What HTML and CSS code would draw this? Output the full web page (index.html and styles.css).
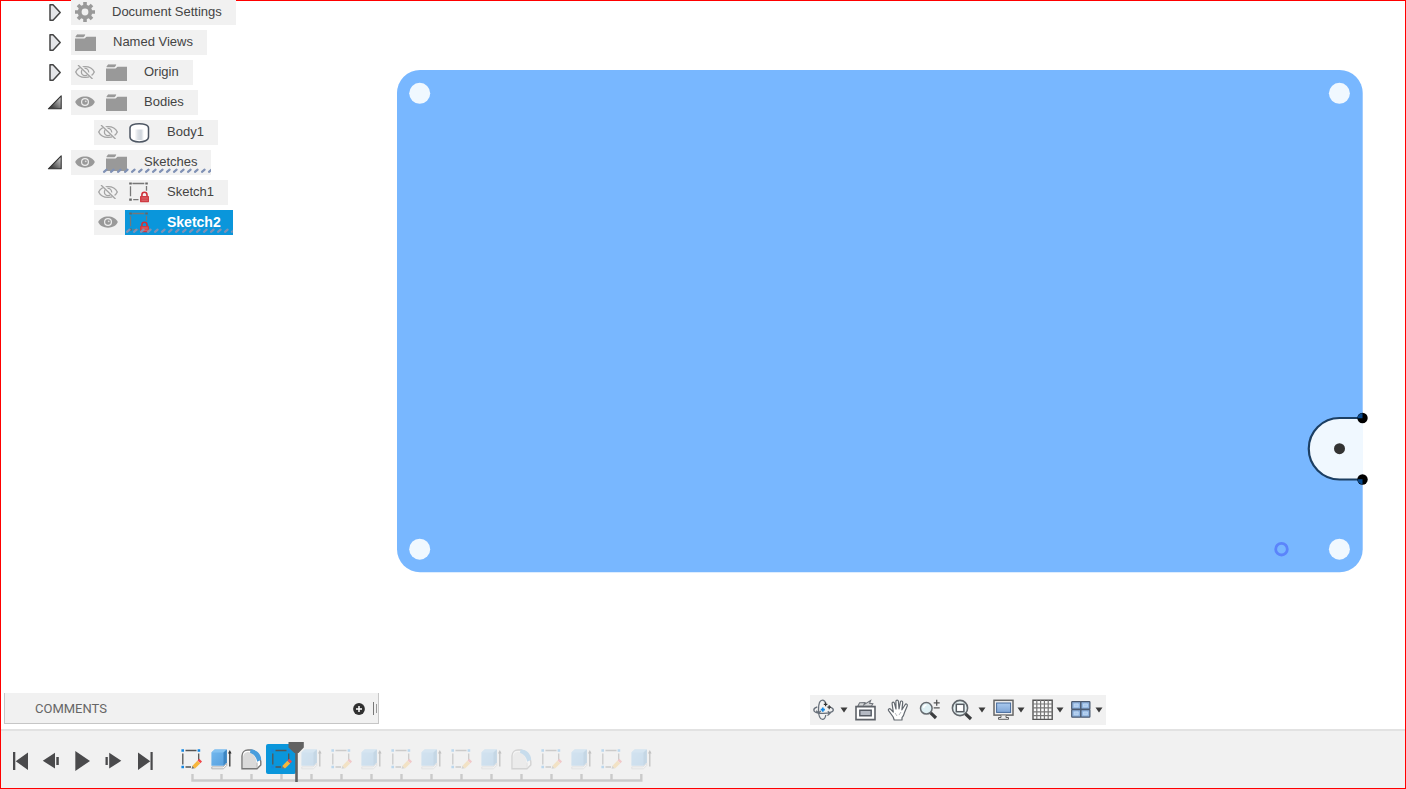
FILE: index.html
```html
<!DOCTYPE html>
<html lang="en">
<head>
<meta charset="utf-8">
<meta name="viewport" content="width=device-width, initial-scale=1">
<title>Sketch editor</title>
<link rel="stylesheet" href="styles.css">
</head>
<body>
<svg class="defs" aria-hidden="true">
  <defs>
    <linearGradient id="g-open" x1="0" y1="1" x2="1" y2="0"><stop offset="0.2" stop-color="#444"/><stop offset="1" stop-color="#ddd"/></linearGradient>
    <linearGradient id="g-body" x1="0" y1="0" x2="1" y2="0"><stop offset="0" stop-color="#fff"/><stop offset="0.35" stop-color="#dde1e6"/><stop offset="0.7" stop-color="#cfd5dc"/><stop offset="1" stop-color="#fff"/></linearGradient>
    <linearGradient id="g-cube" x1="0" y1="0" x2="1" y2="1"><stop offset="0" stop-color="#74b9ee"/><stop offset="1" stop-color="#559fdf"/></linearGradient>
    <linearGradient id="g-screen" x1="0" y1="0" x2="0" y2="1"><stop offset="0" stop-color="#a9c9ee"/><stop offset="1" stop-color="#7fa5d6"/></linearGradient>
    <pattern id="hatch" width="7" height="9" patternUnits="userSpaceOnUse"><path d="M2 5.8 4.6 3.6" stroke="#8091b5" stroke-width="2.2" stroke-linecap="round"/></pattern>
  </defs>
  <symbol id="closed" viewBox="0 0 18 25"><path d="M4 4.8H7L14.2 12.5 7 20.2H4Z" fill="#e4e5e8" stroke="#444" stroke-width="1.5" stroke-linejoin="round"/></symbol>
  <symbol id="open" viewBox="0 0 18 25"><path d="M2.4 18.8H15.2V5.8Z" fill="url(#g-open)" stroke="#333" stroke-width="1.1" stroke-linejoin="round"/></symbol>
  <symbol id="gear" viewBox="0 0 20 20"><g stroke="#999" stroke-width="3.6"><path d="M10 0V20M0 10H20M3 3 17 17M17 3 3 17"/></g><circle cx="10" cy="10" r="7.3" fill="#999"/><circle cx="10" cy="10" r="3.4" fill="#f1f1f1"/></symbol>
  <symbol id="folder" viewBox="0 0 21 17"><path d="M0 4V17H21V2.7H11.5L9.5 4.5H0Z" fill="#999"/><path d="M.8 2.9 2 .8H10L8.6 2.9Z" fill="#999" stroke="#999" stroke-width=".6"/></symbol>
  <symbol id="eye" viewBox="0 0 20 14"><path d="M.2 7C3-.5 17-.5 19.8 7 17 14.5 3 14.5.2 7Z" fill="#999"/><circle cx="10" cy="7" r="4" fill="#eee"/><circle cx="10" cy="7" r="2.8" fill="#999"/><circle cx="10.7" cy="6.3" r=".9" fill="#ddd"/></symbol>
  <symbol id="eye-off" viewBox="0 0 20 14"><g fill="none" stroke="#a3a3a3" stroke-width="1.3"><path d="M.7 7C4-.2 16-.2 19.3 7 16 14.2 4 14.2.7 7Z"/><circle cx="10" cy="7" r="3.6"/><path d="M4.2 0 18 13.6" stroke="#f1f1f1" stroke-width="2.6"/><path d="M3 0 17.5 14"/></g></symbol>
  <symbol id="body" viewBox="0 0 21 21"><path d="M1 6C1 .2 19.5 .2 19.5 6V15C19.5 21.6 1 21.6 1 15Z" fill="#fff" stroke="#4d5663" stroke-width="1.5"/><path d="M5.5 7.5H15V18H5.5Z" fill="url(#g-body)"/></symbol>
  <symbol id="sketch-lock" viewBox="0 0 21 21"><path d="M3.4 1.5H15.3M1.5 4.3V14.3M17.5 4V8.8M4.2 17.7H9.5" stroke="#777" stroke-width="1.3"/><path d="M.2.5H2.8V2.6H.2ZM16.3.5H18.8V2.6H16.3ZM.2 16.6H2.8V18.8H.2Z" fill="#666"/><path d="M12.9 14.5V12.8C12.9 9.4 18 9.4 18 12.8V14.5" fill="none" stroke="#cf3038" stroke-width="1.6"/><rect x="11" y="14" width="9" height="6.2" rx=".6" fill="#cf3b42"/><path d="M12.5 16H18.8M12.5 18.2H18.8" stroke="#e58286" stroke-width=".7"/></symbol>
  <symbol id="plus" viewBox="0 0 12 12"><circle cx="6" cy="6" r="5.9" fill="#303030"/><path d="M6 3V9M3 6H9" stroke="#fff" stroke-width="1.5"/></symbol>
  <symbol id="caret" viewBox="0 0 8 6"><path d="M.5.5H7.5L4 5.5Z" fill="#3c3c3c"/></symbol>

  <symbol id="orbit" viewBox="0 0 22 22"><g fill="none" stroke="#68707a" stroke-width="1.3"><path d="M12.8 16C12.3 19 11 20.4 9.5 20.4 7 20.4 5.5 16.5 5.5 10.8S7 1.2 9.5 1.2C11 1.2 12.1 2.4 12.7 4.5"/><path d="M4.3 7.8C2 8.6.8 9.6.8 10.9.8 13 5 14.4 10.3 14.4S20.3 13 20.3 10.9C20.3 9.7 19 8.7 17.2 8.1M14.5 16.6 17 14.2 14.8 12.2M3.2 11.7 5.5 14 7.8 11.9"/><path d="M10.8 5.4H14.4M12.6 3.6V7.3M14.4 8.2H18M16.2 6.2V10.2" stroke="#333" stroke-width="1.2"/></g><path d="M9.8 8.6V12.8M7.7 10.7H11.9" stroke="#1687e0" stroke-width="1.7"/></symbol>
  <symbol id="look" viewBox="0 0 22 22"><path d="M2.8 7.2 4.6 3.8 10 3.6 9 5.6 15.6 1.6 14.6 4.4 17.8 4.8 16.5 7.2Z" fill="#d6d8da" stroke="#70747a" stroke-width="1.1"/><path d="M1 7.6H20V20.6H1Z" fill="#fff" stroke="#5e6268" stroke-width="1.6"/><path d="M4.8 11.2H16.2V16.8H4.8Z" fill="#b4b9c3" stroke="#555b64" stroke-width="1.4"/></symbol>
  <symbol id="hand" viewBox="0 0 22 22"><path d="M7.2 21 6.2 18 1.6 11.6C.7 10.2 2.5 9 3.7 10.3L6.3 13 5.1 4.6C4.9 2.8 7 2.5 7.4 4.1L9 10 8.9 2.3C9 .6 11.2.6 11.4 2.3L12 9.8 13.4 3C13.8 1.4 15.9 1.8 15.7 3.6L14.9 10.8 18.1 5.7C19 4.3 20.9 5.3 20.2 6.9L17.6 13.2C17 16 16.2 17.6 15 18.6V21Z" fill="#fff" stroke="#62686f" stroke-width="1.2" stroke-linejoin="round"/><path d="M8 14 10 17M14 13 12 16" stroke="#b4b8bd"/></symbol>
  <symbol id="zoom" viewBox="0 0 22 22"><circle cx="7.3" cy="9.3" r="5.8" fill="#dff0f4" stroke="#666b70" stroke-width="1.5"/><path d="M4.5 8.8C4.8 7 6 6.1 7.5 6" fill="none" stroke="#fff" stroke-width="1.5"/><path d="M11.7 13.8 17 19" stroke="#3b3d3f" stroke-width="3.2"/><path d="M17.7 .8V6.8M14.7 3.8H20.7M14.7 8.8H20.7" stroke="#555" stroke-width="1.3"/></symbol>
  <symbol id="fit" viewBox="0 0 22 22"><circle cx="9" cy="9" r="7.6" fill="#e9f4f5" stroke="#61666b" stroke-width="1.6"/><rect x="5.3" y="5.3" width="7.6" height="7.4" fill="#fff" stroke="#555b62" stroke-width="1.5"/><path d="M14.5 14.8 20 20" stroke="#3b3d3f" stroke-width="3.2"/></symbol>
  <symbol id="display" viewBox="0 0 22 22"><rect x="1" y="1.3" width="19" height="14.8" fill="#f0f0f0" stroke="#666" stroke-width="1.5"/><rect x="3.6" y="4" width="14" height="9.4" fill="url(#g-screen)" stroke="#466a9b"/><path d="M8 16.5V18.5H5.5V20.3H15.5V18.5H13V16.5" fill="#eee" stroke="#606060"/></symbol>
  <symbol id="grid" viewBox="0 0 22 22"><path d="M1 1.2H20.2V20.4H1Z" fill="#fafafa" stroke="#555" stroke-width="1.4"/><path d="M4.8 1V20M8.6 1V20M12.4 1V20M16.2 1V20M1 5H20M1 8.9H20M1 12.8H20M1 16.7H20" stroke="#777" stroke-width="1.2"/></symbol>
  <symbol id="views" viewBox="0 0 22 22"><g fill="#8fb3df" stroke="#4b5a70" stroke-width="1.2"><rect x=".7" y="2.6" width="9" height="7.6" rx=".6"/><rect x="9.9" y="2.6" width="9" height="7.6" rx=".6"/><rect x=".7" y="10.6" width="9" height="7.6" rx=".6"/><rect x="9.9" y="10.6" width="9" height="7.6" rx=".6"/></g><path d="M3.2 5H7.2V7.8H3.2ZM12.4 5H16.4V7.8H12.4ZM3.2 13H7.2V15.8H3.2ZM12.4 13H16.4V15.8H12.4Z" fill="#a9c9ee" stroke="#c3daf4" stroke-width=".8"/></symbol>

  <symbol id="first" viewBox="0 0 31 30"><path d="M8 6H10.3V24H8ZM23 6.5V24L10.7 15.2Z" fill="#4a4a4c"/></symbol>
  <symbol id="back" viewBox="0 0 31 30"><path d="M19 6.8V22.6L6.8 14.8ZM20.3 11H22.8V19H20.3Z" fill="#4a4a4c"/></symbol>
  <symbol id="play" viewBox="0 0 31 30"><path d="M8.3 5V25L23 15Z" fill="#4a4a4c"/></symbol>
  <symbol id="forward" viewBox="0 0 31 30"><path d="M7.5 11H9.8V19H7.5ZM11.2 6.8V22.6L23.3 14.8Z" fill="#4a4a4c"/></symbol>
  <symbol id="last" viewBox="0 0 31 30"><path d="M9 6.5V24L21.3 15.2ZM21.5 6H23.7V24H21.5Z" fill="#4a4a4c"/></symbol>

  <symbol id="sketch" viewBox="0 0 30 30"><path d="M9.5 6.5H20.5M6.8 9.5V20.5M22.7 9.5V16M9.5 23H15" stroke="#555" stroke-width="1.3"/><path d="M5.4 5.2H8V7.8H5.4ZM21.6 5.2H24.2V7.8H21.6ZM5.4 21.7H8V24.3H5.4Z" fill="#1487e2"/><path d="M15.6 24.8 16.4 21.8 19 24.2Z" fill="#777"/><path d="M16.3 22 21.3 16.8 24.2 19.4 19 24.5Z" fill="#f7b63c"/><path d="M21.5 16.5 23.2 14.8 26 17.4 24.4 19.2Z" fill="#f0484b"/></symbol>
  <symbol id="extrude" viewBox="0 0 30 30"><path d="M5.8 22.9H17.2L20.7 19.4V21.5L17.5 24.8H5.8Z" fill="#fff" stroke="#aaa" stroke-width=".9"/><path d="M5.4 8.5 8.6 5.5H20.8V18.2L17.5 21.7H5.4Z" fill="url(#g-cube)"/><path d="M5.4 8.5 8.6 5.5H20.8L17.5 8.5Z" fill="#84c2f1"/><path d="M17.5 8.5 20.8 5.5V18.2L17.5 21.7Z" fill="#3d86c2"/><path d="M23.8 8V22.5" stroke="#333" stroke-width="1.3"/><path d="M22 9.5 23.8 6 25.6 9.5Z" fill="#333"/></symbol>
  <symbol id="fillet" viewBox="0 0 30 30"><path d="M6 24.8V12C6 8.5 8.5 6 12 6H15C20.5 7 24 12 24.8 17.5V21L21 24.8Z" fill="#fff" stroke="#777" stroke-width="1.4"/><path d="M7 24V14C7 10 9 8 12.5 8 17.5 9 20.5 14 20.5 19V24Z" fill="#dadada"/><path d="M14.5 5.6C21 5.6 25 10.5 25.2 15.8L21.2 17.8C20.6 13.5 18.2 10.3 14 8.7Z" fill="#479ddd"/><path d="M21 18.5V24" stroke="#aaa"/></symbol>
</svg>

<div class="app">
  <main class="workspace">
    <nav class="browser" aria-label="Browser">
      <ul class="tree">
        <li class="row"><button class="toggle" aria-label="Expand Document Settings"><svg><use href="#closed"/></svg></button><div class="item"><svg class="ic-gear"><use href="#gear"/></svg><span class="label">Document Settings</span></div></li>
        <li class="row"><button class="toggle" aria-label="Expand Named Views"><svg><use href="#closed"/></svg></button><div class="item"><svg class="ic-folder"><use href="#folder"/></svg><span class="label">Named Views</span></div></li>
        <li class="row"><button class="toggle" aria-label="Expand Origin"><svg><use href="#closed"/></svg></button><div class="item"><button class="vis" aria-label="Show Origin"><svg><use href="#eye-off"/></svg></button><svg class="ic-folder"><use href="#folder"/></svg><span class="label">Origin</span></div></li>
        <li class="row"><button class="toggle" aria-label="Collapse Bodies"><svg><use href="#open"/></svg></button><div class="item"><button class="vis" aria-label="Hide Bodies"><svg><use href="#eye"/></svg></button><svg class="ic-folder"><use href="#folder"/></svg><span class="label">Bodies</span></div></li>
        <li class="row child"><div class="item"><button class="vis" aria-label="Show Body1"><svg><use href="#eye-off"/></svg></button><svg class="ic-part"><use href="#body"/></svg><span class="label">Body1</span></div></li>
        <li class="row"><button class="toggle" aria-label="Collapse Sketches"><svg><use href="#open"/></svg></button><div class="item"><button class="vis" aria-label="Hide Sketches"><svg><use href="#eye"/></svg></button><svg class="ic-folder"><use href="#folder"/></svg><span class="label">Sketches</span><svg class="hatch"><rect width="100%" height="9" fill="url(#hatch)"/></svg></div></li>
        <li class="row child"><div class="item"><button class="vis" aria-label="Show Sketch1"><svg><use href="#eye-off"/></svg></button><svg class="ic-part"><use href="#sketch-lock"/></svg><span class="label">Sketch1</span></div></li>
        <li class="row child"><div class="item selected"><button class="vis" aria-label="Hide Sketch2"><svg><use href="#eye"/></svg></button><svg class="ic-part"><use href="#sketch-lock"/></svg><span class="label">Sketch2</span><svg class="hatch"><rect width="100%" height="9" fill="url(#hatch)"/></svg></div></li>
      </ul>
    </nav>
    <section class="canvas" aria-label="Sketch canvas">
      <svg class="drawing" viewBox="395 68 975 508" role="img" aria-label="Plate profile">
        <rect x="397" y="70" width="965.7" height="502.3" rx="23" fill="#78b7ff"/>
        <g fill="#f0f8ff"><circle cx="419.7" cy="93.3" r="10.5"/><circle cx="1339.4" cy="93.3" r="10.5"/><circle cx="419.7" cy="549.2" r="10.5"/><circle cx="1339.4" cy="549.2" r="10.5"/><path d="M1363 418H1339.5A30.75 30.75 0 0 0 1339.5 479.5H1363Z"/></g>
        <path d="M1362 418H1339.5A30.75 30.75 0 0 0 1339.5 479.5H1362" fill="none" stroke="#1c3f63" stroke-width="2.2"/>
        <circle cx="1339.5" cy="448.7" r="5.5" fill="#333"/>
        <circle cx="1362.5" cy="418" r="5.2"/><circle cx="1362.5" cy="479.5" r="5.2"/>
        <path d="M1362.5 418.2H1357.5A5 5 0 0 1 1362.5 413.2ZM1362.5 479.3H1357.5A5 5 0 0 0 1362.5 484.3Z" fill="#07488e"/>
        <circle cx="1281.5" cy="549.2" r="5.8" fill="none" stroke="#5b84fb" stroke-width="2.8"/>
      </svg>
    </section>
  </main>

  <div class="dock">
    <section class="comments">
      <h2>COMMENTS</h2>
      <button class="add" aria-label="Add comment"><svg><use href="#plus"/></svg></button>
      <span class="grip"></span>
    </section>
    <div class="toolbar" role="toolbar" aria-label="Navigation">
      <button class="tool wide" aria-label="Orbit"><svg><use href="#orbit"/></svg><svg class="caret"><use href="#caret"/></svg></button>
      <button class="tool single" aria-label="Look at"><svg><use href="#look"/></svg></button>
      <button class="tool single" aria-label="Pan"><svg><use href="#hand"/></svg></button>
      <button class="tool single" aria-label="Zoom"><svg><use href="#zoom"/></svg></button>
      <button class="tool wide" aria-label="Fit"><svg><use href="#fit"/></svg><svg class="caret"><use href="#caret"/></svg></button>
      <button class="tool" aria-label="Display settings"><svg><use href="#display"/></svg><svg class="caret"><use href="#caret"/></svg></button>
      <button class="tool" aria-label="Grid and snaps"><svg><use href="#grid"/></svg><svg class="caret"><use href="#caret"/></svg></button>
      <button class="tool" aria-label="Viewports"><svg><use href="#views"/></svg><svg class="caret"><use href="#caret"/></svg></button>
    </div>
  </div>

  <footer class="timeline">
    <div class="transport">
      <button aria-label="Go to start"><svg><use href="#first"/></svg></button>
      <button aria-label="Step back"><svg><use href="#back"/></svg></button>
      <button aria-label="Play"><svg><use href="#play"/></svg></button>
      <button aria-label="Step forward"><svg><use href="#forward"/></svg></button>
      <button aria-label="Go to end"><svg><use href="#last"/></svg></button>
    </div>
    <div class="history">
      <ol class="steps">
        <li><button aria-label="Sketch"><svg><use href="#sketch"/></svg></button></li>
        <li><button aria-label="Extrude"><svg><use href="#extrude"/></svg></button></li>
        <li><button aria-label="Fillet"><svg><use href="#fillet"/></svg></button></li>
        <li class="active"><button aria-label="Sketch"><svg><use href="#sketch"/></svg></button></li>
        <li class="future"><button aria-label="Extrude"><svg><use href="#extrude"/></svg></button></li>
        <li class="future"><button aria-label="Sketch"><svg><use href="#sketch"/></svg></button></li>
        <li class="future"><button aria-label="Extrude"><svg><use href="#extrude"/></svg></button></li>
        <li class="future"><button aria-label="Sketch"><svg><use href="#sketch"/></svg></button></li>
        <li class="future"><button aria-label="Extrude"><svg><use href="#extrude"/></svg></button></li>
        <li class="future"><button aria-label="Sketch"><svg><use href="#sketch"/></svg></button></li>
        <li class="future"><button aria-label="Extrude"><svg><use href="#extrude"/></svg></button></li>
        <li class="future"><button aria-label="Fillet"><svg><use href="#fillet"/></svg></button></li>
        <li class="future"><button aria-label="Sketch"><svg><use href="#sketch"/></svg></button></li>
        <li class="future"><button aria-label="Extrude"><svg><use href="#extrude"/></svg></button></li>
        <li class="future"><button aria-label="Sketch"><svg><use href="#sketch"/></svg></button></li>
        <li class="future"><button aria-label="Extrude"><svg><use href="#extrude"/></svg></button></li>
      </ol>
      <svg class="ruler" viewBox="0 0 480 8" aria-hidden="true"><path d="M16.5 0V6.5H465.3V0M45.5 0V6M75.5 0V6M105.5 0V6M135.5 0V6M165.5 0V6M195.5 0V6M225.5 0V6M255.5 0V6M285.5 0V6M315.5 0V6M345.5 0V6M375.5 0V6M405.5 0V6M435.5 0V6" fill="none" stroke="#cacaca" stroke-width="2.4"/></svg>
      <svg class="marker" viewBox="0 0 16 40" aria-hidden="true"><path d="M.5 0H15.8V5.5L10.5 11H9.8V40H7.2V11H6.4L.5 5.5Z" fill="#626262"/></svg>
    </div>
  </footer>
</div>
</body>
</html>
```
FILE: styles.css
```css
* { box-sizing: border-box; }

body {
  margin: 0;
  background: #fff;
  color: #444;
  font: 13px/24px "Liberation Sans", Arial, sans-serif;
}

button {
  display: flex;
  align-items: center;
  margin: 0;
  padding: 0;
  border: 0;
  background: none;
  cursor: pointer;
}

svg { display: block; flex: none; }
ul, ol { margin: 0; padding: 0; list-style: none; }

.defs { position: absolute; width: 0; height: 0; }

.app {
  display: flex;
  flex-direction: column;
  min-height: 100vh;
  outline: 1px solid #f00;
  outline-offset: -1px;
}

/* Workspace */
.workspace {
  flex: 1;
  display: grid;
  grid-template-columns: 395px minmax(0, 1fr);
}

.tree { display: grid; gap: 5px; }

.row {
  display: flex;
  gap: 7px;
  padding-left: 46px;
}
.row.child { padding-left: 94px; }

.toggle svg { width: 18px; height: 25px; }

.item {
  position: relative;
  display: flex;
  align-items: center;
  height: 25px;
  padding: 0 14px 1px 4px;
  background: #f1f1f1;
}

.label { margin-left: 17px; }
.vis { margin-right: 11px; }
.vis svg { width: 20px; height: 14px; }
.ic-gear { width: 20px; height: 20px; }
.ic-folder { width: 21px; height: 17px; }
.ic-part { width: 21px; height: 21px; }

.item.selected {
  padding-right: 12px;
  background: linear-gradient(to right, #f1f1f1 31px, #0a96db 31px);
  color: #fff;
  font-size: 14px;
  font-weight: bold;
}

.hatch {
  position: absolute;
  left: 31px;
  bottom: 0;
  width: calc(100% - 31px);
  height: 9px;
}

.canvas { padding: 68px 36px 24px 0; }
.drawing { width: 100%; height: auto; }

/* Comments and navigation */
.dock {
  display: flex;
  justify-content: space-between;
  min-height: 36px;
  padding: 0 300px 4px 4px;
}

.comments {
  display: flex;
  align-items: center;
  align-self: flex-start;
  width: 375px;
  height: 31px;
  padding: 1px 0 0 30px;
  border: solid #c6c6c6;
  border-width: 0 1px 1px;
  background: #f1f1f1;
}
.comments h2 {
  flex: 1;
  margin: 0;
  color: #666;
  font: 13px/30px Roboto, sans-serif;
}
.add svg { width: 12px; height: 12px; }
.grip {
  display: flex;
  align-items: center;
  width: 5px;
  height: 13px;
  margin-left: 8px;
  border-left: 1px solid #777;
}
.grip::after {
  content: "";
  height: 9px;
  margin-left: 2px;
  border-left: 1px solid #999;
}

.toolbar {
  display: flex;
  align-items: center;
  align-self: flex-end;
  gap: 7px;
  height: 30px;
  padding: 0 3px;
  background: #f1f1f1;
}
.tool { gap: 2px; }
.tool.wide { gap: 5px; }
.tool.single { margin-right: 3px; }
.tool svg { width: 22px; height: 22px; }
.tool .caret { width: 8px; height: 6px; }

/* Timeline */
.timeline {
  display: flex;
  align-items: flex-start;
  gap: 16px;
  height: 60px;
  padding: 13px 5px 0;
  border-top: 2px solid #e2e2e2;
  background: #f1f1f1;
}

.transport { display: flex; padding-top: 2px; }
.transport svg { width: 31px; height: 30px; }

.history { position: relative; }
.steps { display: flex; }
.steps svg { width: 30px; height: 30px; }
.active { border-radius: 2px; background: #0a96db; }
.future svg { opacity: 0.24; }
.ruler { width: 480px; height: 8px; }

.marker {
  position: absolute;
  top: -2px;
  left: 112px;
  width: 16px;
  height: 40px;
}
```
